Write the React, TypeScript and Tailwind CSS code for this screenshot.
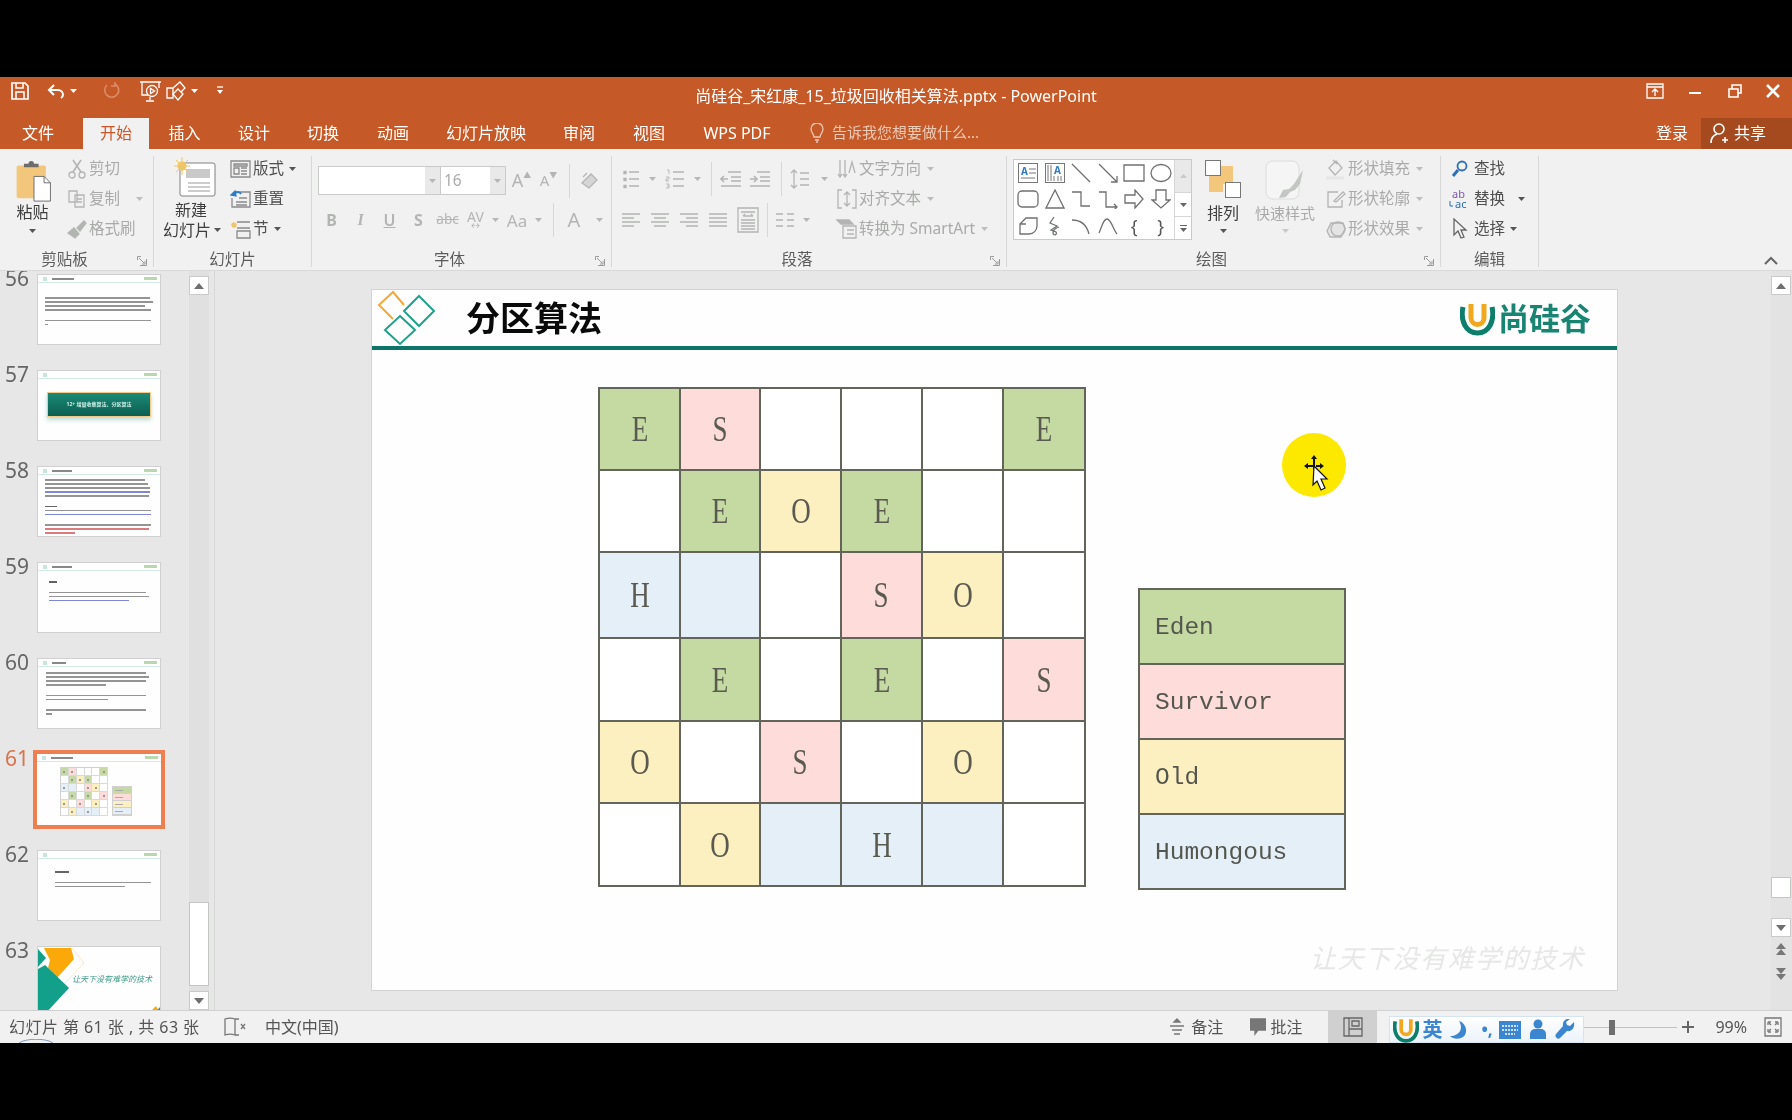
import React from "react";

const G = "#c5daa2", P = "#fddcda", Y = "#fdf0c0", B = "#e4eff8";
const FONT = { fontFamily: '"Noto Sans","Noto Sans CJK SC",sans-serif' };

type IP = { className?: string; children?: React.ReactNode; w?: number; h?: number; vb?: string };
function Ic({ w = 20, h = 20, vb, className = "", children }: IP) {
  return (
    <svg width={w} height={h} viewBox={vb || `0 0 ${w} ${h}`} fill="none" stroke="currentColor" strokeWidth="1.3" className={"shrink-0 " + className}>
      {children}
    </svg>
  );
}
const Caret = ({ c = "text-[#b5b7b5]", cls = "" }: { c?: string; cls?: string }) => (
  <svg width="7" height="4" viewBox="0 0 7 4" className={"shrink-0 " + c + " " + cls}><path d="M0 0h7L3.5 4z" fill="currentColor" /></svg>
);
const Sep = ({ h = "h-[34px]" }: { h?: string }) => <div className={"w-px bg-[#d6d7d6] shrink-0 " + h} />;

function Launcher() {
  return (
    <svg width="10" height="10" viewBox="0 0 10 10" className="absolute right-[6px] bottom-[1px] text-[#9a9c9a]" fill="none" stroke="currentColor">
      <path d="M.5 4V.5H4M2 2l5 5M9.5 3v6.5H3" /><path d="M5 8h3V5" />
    </svg>
  );
}

function Group({ w, title, launcher, children, noBorder }: { w: string; title: string; launcher?: boolean; children: React.ReactNode; noBorder?: boolean }) {
  return (
    <div className={"shrink-0 h-[111px] flex flex-col " + w + (noBorder ? "" : " border-r border-[#d6d7d6]")}>
      <div className="h-[95px] flex">{children}</div>
      <div className={"relative h-[16px] text-[15.5px] leading-[16px] text-[#5c5c5c] text-center " + (launcher ? "pr-[24px]" : "")}>
        {title}
        {launcher && <Launcher />}
      </div>
    </div>
  );
}

function SmallRow({ icon, text, off, caret, iw = "w-[24px]", caretMl = "ml-[6px]" }: { icon: React.ReactNode; text: string; off?: boolean; caret?: boolean; iw?: string; caretMl?: string }) {
  return (
    <div className={"h-[26px] flex items-center text-[15.5px] leading-none whitespace-nowrap " + (off ? "text-[#a9aba9]" : "text-[#505050]")}>
      <div className={"flex justify-center shrink-0 " + iw}>{icon}</div>
      <span>{text}</span>
      {caret && <Caret c={off ? "text-[#bcbebc]" : "text-[#555]"} cls={caretMl} />}
    </div>
  );
}

const Cell = ({ w, children, cls = "" }: { w: string; children?: React.ReactNode; cls?: string }) => (
  <div className={"flex justify-center items-center shrink-0 " + w + " " + cls}>{children}</div>
);

function QAT() {
  return (
    <div className="flex items-center text-white h-[28px] pl-[10px]">
      <Ic w={20} h={20} className="mr-[16px]"><path d="M2 2h13l3 3v13H2z" strokeWidth="1.7" /><path d="M6 2v5h7V2M6 18v-7h8v7" strokeWidth="1.5" /></Ic>
      <Ic w={22} h={20} className="mr-[2px]"><path d="M8 4L3 9l5 5M3 9h9a5 5 0 015 5 4 4 0 01-2 3" strokeWidth="2" /></Ic>
      <Caret c="text-white" cls="mr-[24px]" />
      <Ic w={20} h={20} className="text-[#dc8d6b] mr-[18px]"><path d="M6 4a7 7 0 108-1M14 1v4h-4" strokeWidth="1.6" /></Ic>
      <Ic w={24} h={24} className="mr-[2px]"><path d="M1 3h21M3 3v13h6M20 3v6" /><circle cx="13" cy="12" r="5.5" /><path d="M11.500 9.500v5l4-2.500z" /><path d="M11 18v3M7 22h8" /></Ic>
      <Ic w={24} h={22} className="mr-[2px]"><path d="M2 8h6v10H2zM8 8l7-6 5 6-4 4" /><path d="M13 9l5 5-5 6-5-6z" /></Ic>
      <Caret c="text-white" cls="mr-[18px]" />
      <Ic w={8} h={12}><path d="M1 2h6" /><path d="M1 5h6L4 9z" fill="currentColor" stroke="none" /></Ic>
    </div>
  );
}

function WindowCtl() {
  return (
    <div className="flex justify-end items-center text-white h-[28px] pr-[12px]">
      <Ic w={18} h={16} className="mr-[24px]"><path d="M1 1h16v14H1zM1 4h16M9 13V7M6 9l3-3 3 3" /></Ic>
      <Ic w={14} h={14} className="mr-[26px]"><path d="M1 9h12" strokeWidth="2" /></Ic>
      <Ic w={14} h={14} className="mr-[24px]"><path d="M1 5h9v8H1zM4 5V1h9v8h-3" strokeWidth="1.6" /></Ic>
      <Ic w={14} h={14}><path d="M1 1l12 12M13 1L1 13" strokeWidth="2.600" /></Ic>
    </div>
  );
}

const TABS: [string, string][] = [
  ["文件", "w-[83px] pr-[7px]"], ["开始", "w-[66px]"], ["插入", "w-[71px]"], ["设计", "w-[68px]"], ["切换", "w-[70px]"],
  ["动画", "w-[70px]"], ["幻灯片放映", "w-[116px]"], ["审阅", "w-[70px]"], ["视图", "w-[70px]"], ["WPS PDF", "w-[106px]"],
];

function Tabs() {
  return (
    <div className="h-[31px] flex bg-[#c55a28] text-[16px] text-white">
      {TABS.map(([t, w]) => (
        <div key={t} className={w + " flex items-center justify-center pb-[2px] " + (t === "开始" ? "bg-[#f0f1f0] text-[#c9572a]" : "")}>{t}</div>
      ))}
      <div className="flex items-center ml-[19px] pb-[2px] text-[#edc9b6] text-[15px]">
        <Ic w={16} h={20} className="mr-[7px]"><path d="M5 14c0-3-3-4-3-8a6 6 0 0112 0c0 4-3 5-3 8zM6 17h4M7 19h2" /></Ic>
        告诉我您想要做什么...
      </div>
      <div className="ml-auto flex items-center">
        <span className="mr-[13px] pb-[2px]">登录</span>
        <div className="w-[91px] h-full flex items-center bg-[#a5491f] pl-[8px] pb-[2px]">
          <Ic w={20} h={22} className="mr-[5px]"><circle cx="10" cy="7" r="5" strokeWidth="1.6" /><path d="M2 21c0-5 3-8 6-9M13 18h6M16 15v6" strokeWidth="1.6" /></Ic>
          共享
        </div>
      </div>
    </div>
  );
}

const L = "text-[#b3b5b3]";
function Clipboard() {
  return (
    <>
      <div className="w-[65px] flex flex-col items-center">
        <svg width="38" height="42" viewBox="0 0 38 46" className="mt-[4px] ml-[2px]">
          <rect x="0" y="6" width="32" height="36" rx="2" fill="#f2c77b" />
          <path d="M8 8V4h5a3 3 0 016 0h5v4z" fill="#6c6c6c" />
          <path d="M19 18h11l7 7v20H19z" fill="#fff" stroke="#666" />
          <path d="M30 18v7h7" fill="none" stroke="#666" />
        </svg>
        <div className="text-[16px] leading-[20px] text-[#3e3e3e]">粘贴</div>
        <Caret c="text-[#555]" cls="mt-[7px]" />
      </div>
      <div className="flex flex-col gap-[4px]">
        <SmallRow off text="剪切" icon={<Ic w={20} h={20} className={L}><circle cx="5" cy="16" r="3" /><circle cx="15" cy="16" r="3" /><path d="M6 13L14 1M14 13L6 1" strokeWidth="1.6" /></Ic>} />
        <SmallRow off caret caretMl="ml-[16px]" text="复制" icon={<Ic w={20} h={20} className={L}><path d="M2 2h8v11H2zM8 6h9v12H8zM10 10h5M10 13h5" /></Ic>} />
        <SmallRow off text="格式刷" icon={<Ic w={20} h={20} className={L}><path d="M1 14l6-5 5 6-4 4z" fill="currentColor" /><path d="M10 9l7-7 2 2-6 8z" fill="currentColor" /></Ic>} />
      </div>
    </>
  );
}

function Slides() {
  return (
    <>
      <div className="w-[74px] pl-[4px] flex flex-col items-center shrink-0">
        <svg width="42" height="40" viewBox="0 0 42 40" className="mt-[1px] ml-[4px]">
          <rect x="6" y="6" width="35" height="33" rx="2" fill="#fff" stroke="#808080" />
          <rect x="12" y="12" width="24" height="9" fill="#c9c9c9" />
          <path d="M14 26h22M14 30h22M14 34h22" stroke="#999" />
          <circle cx="8" cy="9" r="4.500" fill="#f0c568" />
          <path d="M8 0v18M0 9h16M2 3l12 12M14 3L2 15" stroke="#f0c568" />
        </svg>
        <div className="text-[16px] leading-[20px] text-[#3e3e3e] mt-[3px] -ml-[4px]">新建</div>
        <div className="flex items-center text-[16px] leading-[20px] text-[#3e3e3e] whitespace-nowrap -ml-[2px]">幻灯片<Caret c="text-[#555]" cls="ml-[3px]" /></div>
      </div>
      <div className="flex flex-col gap-[4px]">
        <SmallRow caret text="版式" iw="w-[25px]" caretMl="ml-[5px]" icon={<Ic w={21} h={20} className="text-[#8a8a8a]"><path d="M1 2h19v16H1zM4 5h13v2H4zM4 9h5v6H4zM11 9h6M11 12h6M11 15h6" /></Ic>} />
        <SmallRow text="重置" iw="w-[25px]" icon={<Ic w={21} h={20} className="text-[#8a8a8a]"><path d="M6 3h14v15H2V9M9 9h8M6 13h11M6 16h11" /><path d="M1 6l4-4 1 5z" fill="#2d7cc4" stroke="#2d7cc4" /><path d="M4 5c3-3 6-2 7 0" stroke="#2d7cc4" strokeWidth="2" /></Ic>} />
        <SmallRow caret text="节" iw="w-[25px]" caretMl="ml-[5px]" icon={<Ic w={21} h={20} className="text-[#8a8a8a]"><path d="M7 3h13M7 9h13M7 12h13v7H7z" /><path d="M4 3v6M1 6h6M2 4l4 4M6 4L2 8" stroke="#f0c568" /></Ic>} />
      </div>
    </>
  );
}

function Font() {
  return (
    <div className="pl-[5px] pt-[10px] w-full">
      <div className="flex items-center h-[29px]">
        <div className="w-[123px] h-[29px] flex bg-white border border-[#c9cbc9] ml-[1px] shrink-0">
          <div className="flex-1" />
          <div className="w-[15px] bg-[#e8e9e8] flex items-center justify-center"><Caret /></div>
        </div>
        <div className="w-[65px] h-[29px] flex bg-[#f4f5f4] border border-[#c9cbc9] border-l-0 shrink-0">
          <div className="flex-1 text-[15.5px] leading-[27px] text-[#a9aba9] pl-[3px] bg-white">16</div>
          <div className="w-[15px] bg-[#e8e9e8] flex items-center justify-center"><Caret /></div>
        </div>
        <Cell w="w-[27px]" cls="ml-[2px] text-[18px] text-[#b3b5b3]"><span>A</span><span className="text-[8px] -mt-[12px]">▲</span></Cell>
        <Cell w="w-[27px]" cls="text-[15px] text-[#b3b5b3]"><span>A</span><span className="text-[8px] -mt-[12px]">▼</span></Cell>
        <div className="ml-[7px]"><Sep h="h-[34px]" /></div>
        <Cell w="w-[38px]"><Ic w={20} h={20} className={L}><path d="M3 12l9-9 6 6-8 8z" fill="#d4d5d4" /><path d="M4 6l4-4" /></Ic></Cell>
      </div>
      <div className="flex items-center h-[26px] mt-[12px] text-[#b3b5b3] text-[16px] leading-none">
        <Cell w="w-[29px]" cls="font-bold">B</Cell>
        <Cell w="w-[29px]" cls="italic font-bold font-['Liberation_Serif']">I</Cell>
        <Cell w="w-[29px]" cls="underline font-semibold">U</Cell>
        <Cell w="w-[29px]" cls="font-bold">S</Cell>
        <Cell w="w-[29px]" cls="line-through text-[13.5px]">abc</Cell>
        <Cell w="w-[27px]" cls="flex-col text-[14px]"><span>AV</span><span className="text-[9px] -mt-[3px]">↔</span></Cell>
        <Cell w="w-[12px]"><Caret /></Cell>
        <Cell w="w-[32px]" cls="text-[17px]">Aa</Cell>
        <Cell w="w-[10px]"><Caret /></Cell>
        <div className="ml-[10px]"><Sep h="h-[34px]" /></div>
        <Cell w="w-[40px]" cls="text-[20px]">A</Cell>
        <Cell w="w-[10px]"><Caret /></Cell>
      </div>
    </div>
  );
}

function Paragraph() {
  return (
    <>
      <div className="w-[223px] shrink-0 pt-[10px]">
        <div className="flex items-center h-[26px]">
          <Cell w="w-[30px]" cls="ml-[4px]"><Ic w={18} h={20} className={L}><path d="M7 3h10M7 10h10M7 17h10" /><path d="M2 2.500h2v2H2zM2 9.500h2v2H2zM2 16.500h2v2H2z" fill="currentColor" /></Ic></Cell>
          <Cell w="w-[12px]"><Caret /></Cell>
          <Cell w="w-[34px]"><Ic w={20} h={20} className={L}><path d="M8 3h11M8 10h11M8 17h11" /><path d="M2 1h2v4M1 8h3v2H1v2h3M1 15h3v4H1M2 17h2" strokeWidth=".9" /></Ic></Cell>
          <Cell w="w-[10px]"><Caret /></Cell>
          <div className="ml-[9px]"><Sep /></div>
          <Cell w="w-[38px]"><Ic w={22} h={20} className={L}><path d="M8 3h13M11 8h10M11 12h10M1 17h20" /><path d="M8 10H1M4 7l-3 3 3 3" strokeWidth="1.6" /></Ic></Cell>
          <Cell w="w-[20px]"><Ic w={22} h={20} className={L}><path d="M8 3h13M11 8h10M11 12h10M1 17h20" /><path d="M1 10h7M5 7l3 3-3 3" strokeWidth="1.6" /></Ic></Cell>
          <div className="ml-[11px]"><Sep /></div>
          <Cell w="w-[36px]"><Ic w={20} h={22} className={L}><path d="M4 2v18M1 5l3-3 3 3M1 17l3 3 3-3M10 5h9M10 11h9M10 17h9" /></Ic></Cell>
          <Cell w="w-[12px]"><Caret /></Cell>
        </div>
        <div className="flex items-center h-[26px] mt-[15px]">
          <Cell w="w-[29px]" cls="ml-[5px]"><Ic w={19} h={18} className={L}><path d="M0 3h18M0 7h12M0 11h18M0 15h12" /></Ic></Cell>
          <Cell w="w-[29px]"><Ic w={19} h={18} className={L}><path d="M0 3h18M3 7h12M0 11h18M3 15h12" /></Ic></Cell>
          <Cell w="w-[29px]"><Ic w={19} h={18} className={L}><path d="M0 3h18M6 7h12M0 11h18M6 15h12" /></Ic></Cell>
          <Cell w="w-[29px]"><Ic w={19} h={18} className={L}><path d="M0 3h18M0 7h18M0 11h18M0 15h18" /></Ic></Cell>
          <Cell w="w-[29px]"><Ic w={22} h={26} className={L}><path d="M1 1h20v24H1zM4 5h14M4 13h14M4 16h14M4 19h14M4 22h14M6 9h10M6 9l2-2M16 9l-2-2" /></Ic></Cell>
          <div className="ml-[5px]"><Sep /></div>
          <Cell w="w-[34px]"><Ic w={18} h={16} className={L}><path d="M0 2h7M11 2h7M0 8h7M11 8h7M0 14h7M11 14h7" /></Ic></Cell>
          <Cell w="w-[8px]"><Caret /></Cell>
        </div>
      </div>
      <div className="flex flex-col gap-[4px]">
        <SmallRow off caret text="文字方向" icon={<Ic w={20} h={20} className={L}><path d="M3 1v17M8 1v17M1 15l2 3 2-3M6 15l2 3 2-3" /><path d="M12 14l3-11 3 11" /></Ic>} />
        <SmallRow off caret text="对齐文本" icon={<Ic w={20} h={20} className={L}><path d="M5 1H1v18h4M15 1h4v18h-4M10 3v14M7 6l3-3 3 3M7 14l3 3 3-3" /></Ic>} />
        <SmallRow off caret text="转换为 SmartArt" icon={<Ic w={22} h={22} className={L}><path d="M1 2h12l4 4H5z" fill="currentColor" /><path d="M7 8h13v12H7zM11 12h7M11 16h7" /></Ic>} />
      </div>
    </>
  );
}

function Gallery() {
  const c = "text-[#6f7170]";
  const items = [
    <svg key="a" width="20" height="20" viewBox="0 0 20 20" fill="none" stroke="#777"><rect x=".5" y=".5" width="19" height="19" fill="#fff" /><text x="3" y="12" fontSize="10" fill="#2d7cc4" stroke="none" fontWeight="700">A</text><path d="M11 6h7M11 10h7M3 15h14" /></svg>,
    <svg key="b" width="20" height="20" viewBox="0 0 20 20" fill="none" stroke="#777"><rect x=".5" y=".5" width="19" height="19" /><text x="9" y="11" fontSize="10" fill="#2d7cc4" stroke="none" fontWeight="700">A</text><path d="M3 2v16M6 2v16M9 13v5M13 13v5M16 13v5" /></svg>,
    <Ic key="c" className={c}><path d="M1 1l18 18" /></Ic>,
    <Ic key="d" className={c}><path d="M1 1l18 18M19 13v6h-6" /></Ic>,
    <Ic key="e" w={22} h={20} className={c}><path d="M1 2h20v16H1z" /></Ic>,
    <Ic key="f" w={22} h={20} className={c}><ellipse cx="11" cy="10" rx="10" ry="8.500" /></Ic>,
    <Ic key="g" w={22} h={20} className={c}><rect x="1" y="2" width="20" height="16" rx="4" /></Ic>,
    <Ic key="h" className={c}><path d="M10 1L1 19h18z" /></Ic>,
    <Ic key="i" className={c}><path d="M1 3h9v14h9" /></Ic>,
    <Ic key="j" className={c}><path d="M1 3h7v15h11M16 15l3 3-3 3" /></Ic>,
    <Ic key="k" className={c}><path d="M1 6h10V1l8 9-8 9v-5H1z" /></Ic>,
    <Ic key="l" className={c}><path d="M5 1h10v10h4l-9 8-9-8h4z" /></Ic>,
    <Ic key="m" className={c}><path d="M2 8l6-6h11v8a8 8 0 01-8 8H2zM2 8h6" /></Ic>,
    <Ic key="n" className={c}><path d="M9 1L5 7l7 3-6 4 5 2c2 3-3 4-3 1s3-5 6-6" /></Ic>,
    <Ic key="o" className={c}><path d="M1 4c10 0 15 6 17 14" /></Ic>,
    <Ic key="p" className={c}><path d="M1 17c3-6 4-14 8-14s6 10 10 15" /></Ic>,
    <span key="q" className="text-[18px] text-[#555] leading-none">{"{"}</span>,
    <span key="r" className="text-[18px] text-[#555] leading-none">{"}"}</span>,
  ];
  return (
    <div className="w-[179px] h-[81px] ml-[6px] mt-[3px] flex bg-white border border-[#c9cbc9] shrink-0">
      <div className="w-[160px] grid grid-cols-6 grid-rows-3 pl-[1px]">
        {items.map((it, i) => (
          <div key={i} className="flex items-center justify-center">{it}</div>
        ))}
      </div>
      <div className="flex-1 flex flex-col border-l border-[#d5d7d5] bg-[#f4f5f4]">
        <div className="h-[33px] bg-[#e8e9e8] flex items-center justify-center border-b border-[#d5d7d5]"><Caret c="text-[#c8cac8] rotate-180" /></div>
        <div className="h-[24px] flex items-center justify-center bg-white border-b border-[#d5d7d5]"><Caret c="text-[#666]" /></div>
        <div className="flex-1 flex flex-col gap-[2px] items-center justify-center bg-white"><div className="w-[7px] h-px bg-[#666]" /><Caret c="text-[#666]" /></div>
      </div>
    </div>
  );
}

function Drawing() {
  return (
    <>
      <Gallery />
      <div className="w-[62px] flex flex-col items-center shrink-0">
        <svg width="36" height="42" viewBox="0 0 36 42" className="mt-[4px]">
          <rect x="12" y="6" width="16" height="18" fill="#f2c77b" />
          <rect x="4" y="16" width="14" height="16" fill="#f2c77b" />
          <rect x=".5" y=".5" width="15" height="15" fill="#fff" stroke="#777" />
          <rect x="20.5" y="22.5" width="15" height="15" fill="#fff" stroke="#777" />
        </svg>
        <div className="text-[16px] leading-[20px] text-[#3e3e3e] mt-[1px]">排列</div>
        <Caret c="text-[#555]" cls="mt-[6px]" />
      </div>
      <div className="w-[62px] flex flex-col items-center shrink-0">
        <svg width="40" height="42" viewBox="0 0 40 42" className="mt-[4px]">
          <rect x="1" y="1" width="33" height="38" rx="7" fill="#f5f5f6" stroke="#dcdcdc" />
          <path d="M14 38l4-8 6-1 5-5 5-8 4-6-3 14-5 6-5 2-4 5z" fill="#c4c6c4" />
        </svg>
        <div className="text-[15px] leading-[20px] text-[#a9aba9] mt-[1px] whitespace-nowrap">快速样式</div>
        <Caret c="text-[#c8cac8]" cls="mt-[6px]" />
      </div>
      <div className="flex flex-col gap-[4px] ml-[8px]">
        <SmallRow off caret text="形状填充" icon={<Ic w={22} h={22} className={L}><path d="M4 10l7-7 6 7-7 7zM8 2l4 4" /><path d="M1 20h18" strokeWidth="3" stroke="#e4e5e4" /></Ic>} />
        <SmallRow off caret text="形状轮廓" icon={<Ic w={20} h={20} className={L}><path d="M16 11v7H2V3h10" /><path d="M8 12l9-9 2 2-9 8z" /></Ic>} />
        <SmallRow off caret text="形状效果" icon={<Ic w={20} h={20} className={L}><path d="M1 12l4-8h12l2 6-4 8H4z" fill="#e3e4e3" /><circle cx="12" cy="10" r="7" /></Ic>} />
      </div>
    </>
  );
}

function Edit() {
  return (
    <div className="flex flex-col gap-[4px] pl-[5px]">
      <SmallRow text="查找" iw="w-[28px]" icon={<Ic w={18} h={18} className="text-[#2d6fb5]"><circle cx="11" cy="6" r="4.500" strokeWidth="1.8" /><path d="M7 10l-5 6" strokeWidth="3" /></Ic>} />
      <SmallRow caret text="替换" iw="w-[28px]" caretMl="ml-[13px]" icon={<svg width="22" height="22" viewBox="0 0 22 22"><text x="3" y="10" fontSize="11" fill="#7e57a8">ab</text><text x="6" y="20" fontSize="11" fill="#2d6fb5">ac</text><path d="M1 13v5h3" stroke="#2d6fb5" fill="none" /></svg>} />
      <SmallRow caret text="选择" iw="w-[28px]" caretMl="ml-[5px]" icon={<Ic w={16} h={22} className="text-[#666]"><path d="M2 1v16l4-4 3 7 3-1-3-7h5z" /></Ic>} />
    </div>
  );
}

function Ribbon() {
  return (
    <div className="h-[122px] bg-[#f0f1f0] flex pt-[7px] border-b border-[#d8d9d8] text-[#505050]">
      <Group w="w-[154px]" title="剪贴板" launcher><Clipboard /></Group>
      <Group w="w-[158px]" title="幻灯片"><Slides /></Group>
      <Group w="w-[300px]" title="字体" launcher><Font /></Group>
      <Group w="w-[395px]" title="段落" launcher><Paragraph /></Group>
      <Group w="w-[434px]" title="绘图" launcher><Drawing /></Group>
      <Group w="w-[98px]" title="编辑"><Edit /></Group>
      <div className="flex-1 flex justify-end items-end pr-[14px] pb-[5px]">
        <Ic w={14} h={9} className="text-[#666]"><path d="M1 8l6-6 6 6" strokeWidth="2" /></Ic>
      </div>
    </div>
  );
}

const MiniHead = ({ title = "w-[22px]" }: { title?: string }) => (
  <div className="h-[8px] flex items-center pl-[5px] pr-[3px] border-b border-[#d5e9e3]">
    <div className="w-[4px] h-[4px] bg-[#c8e6de] mr-[5px]" />
    <div className={"h-[2px] bg-[#888] " + title} />
    <div className="ml-auto w-[13px] h-[3px] bg-[#b9d8ad]" />
  </div>
);

function Bars({ rows }: { rows: [number, string?][] }) {
  return (
    <div className="flex flex-col gap-[2.5px] blur-[0.4px]">
      {rows.map(([w, c], i) =>
        w === 0 ? <div key={i} className="h-[4px]" /> : <div key={i} className="h-[1.5px] opacity-70" style={{ width: w, background: c || "#666" }} />
      )}
    </div>
  );
}

function Thumb({ n, active, children }: { n: number; active?: boolean; children: React.ReactNode }) {
  return (
    <div className="flex h-[71px] mb-[25px] shrink-0">
      <div className={"w-[37px] pl-[5px] -mt-[8px] text-[21px] leading-[24px] " + (active ? "text-[#d8734d]" : "text-[#666]")}>{n}</div>
      <div className={"w-[124px] h-[71px] bg-[#fdfefd] overflow-hidden " + (active ? "outline-[4px] outline-[#ee7f51]" : "border border-[#cfd0cf]")}>{children}</div>
    </div>
  );
}

const GRID: [string, string][] = [
  ["E", G], ["S", P], ["", ""], ["", ""], ["", ""], ["E", G],
  ["", ""], ["E", G], ["O", Y], ["E", G], ["", ""], ["", ""],
  ["H", B], ["", B], ["", ""], ["S", P], ["O", Y], ["", ""],
  ["", ""], ["E", G], ["", ""], ["E", G], ["", ""], ["S", P],
  ["O", Y], ["", ""], ["S", P], ["", ""], ["O", Y], ["", ""],
  ["", ""], ["O", Y], ["", B], ["H", B], ["", B], ["", ""],
];

function MiniSlide61() {
  return (
    <>
      <MiniHead />
      <div className="flex pl-[23px] pt-[5px]">
        <div className="w-[48px] h-[49px] grid grid-cols-6 grid-rows-6 border-l border-t border-[#cfd0cf]">
          {GRID.map(([t, c], i) => (
            <div key={i} className="border-r border-b border-[#d8d9d8] flex items-center justify-center" style={{ background: c || "#fff" }}>
              {t && <div className="w-[2px] h-[2px] bg-[#999]" />}
            </div>
          ))}
        </div>
        <div className="w-[20px] h-[30px] ml-[4px] mt-[19px] flex flex-col border border-[#cfd0cf]">
          {[G, P, Y, B].map((c) => (
            <div key={c} className="flex-1 border-b border-[#cfd0cf] flex items-center pl-[2px]" style={{ background: c }}>
              <div className="w-[8px] h-px bg-[#aaa]" />
            </div>
          ))}
        </div>
      </div>
    </>
  );
}

function Thumbs() {
  return (
    <div className="w-[189px] h-full overflow-hidden pt-[3px] flex flex-col shrink-0">
      <Thumb n={56}><MiniHead /><div className="pl-[7px] pt-[14px]"><Bars rows={[[105], [108], [100], [106], [0], [106], [3]]} /></div></Thumb>
      <Thumb n={57}>
        <MiniHead title="w-0" />
        <div className="mx-[9px] mt-[13px] h-[25px] bg-gradient-to-b from-[#1c8a77] to-[#0b5f52] border border-[#f1c989] flex items-center justify-center text-[5px] text-[#cfeee7] font-bold shadow-[0_3px_4px_#bcdcd5] whitespace-nowrap">12+ 增量收集算法、分区算法</div>
      </Thumb>
      <Thumb n={58}>
        <MiniHead title="w-[20px]" />
        <div className="pl-[7px] pt-[4px]">
          <Bars rows={[[100], [103], [105], [105, "#4a55c0"], [104], [0], [12, "#222"], [106], [106, "#4a55c0"], [0], [106], [104, "#c44"], [30, "#c44"]]} />
        </div>
      </Thumb>
      <Thumb n={59}>
        <MiniHead title="w-[20px]" />
        <div className="pl-[11px] pt-[10px]"><Bars rows={[[8, "#222"], [0], [97], [100], [80, "#4a55c0"]]} /></div>
      </Thumb>
      <Thumb n={60}>
        <MiniHead title="w-[14px]" />
        <div className="pl-[8px] pt-[5px]"><Bars rows={[[100], [103], [100], [60], [0], [100], [62], [0], [100], [6]]} /></div>
      </Thumb>
      <Thumb n={61} active><MiniSlide61 /></Thumb>
      <Thumb n={62}>
        <MiniHead title="w-0" />
        <div className="pl-[17px] pt-[12px]"><Bars rows={[[14, "#222"], [0], [96], [70]]} /></div>
      </Thumb>
      <Thumb n={63}>
        <div className="relative h-full">
          <svg width="124" height="71" viewBox="0 0 124 71" className="absolute inset-0">
            <path d="M34 1l12 15-15 16-6 6" fill="none" stroke="#fbe8c6" />
            <path d="M6 1h27l3 11-17 19-9-10 2-8z" fill="#fba90a" />
            <path d="M0 2l8 9-8 9z" fill="#13a08a" />
            <path d="M0 22l7-4 24 23-24 26H0z" fill="#13a08a" />
            <path d="M111 66l7-7 4 7z" fill="#fba90a" /><path d="M117 66l5-6v6z" fill="#13a08a" />
          </svg>
          <div className="absolute left-[34px] top-[26px] text-[8px] text-[#3f9a8a] italic whitespace-nowrap">让天下没有难学的技术</div>
        </div>
      </Thumb>
    </div>
  );
}

const ArrowBtn = ({ up, cls = "" }: { up?: boolean; cls?: string }) => (
  <div className={"w-[20px] h-[19px] bg-white border border-[#c9cbc9] flex items-center justify-center shrink-0 " + cls}>
    <svg width="10" height="6" viewBox="0 0 10 6" className={"text-[#6f6f6f] " + (up ? "" : "rotate-180")}><path d="M5 0l5 6H0z" fill="currentColor" /></svg>
  </div>
);

function LeftPanel() {
  return (
    <div className="w-[215px] h-full flex shrink-0 border-r border-[#d6d7d6] bg-[#e6e7e6] pr-[5px]">
      <Thumbs />
      <div className="w-[20px] h-full bg-[#dfe0df] flex flex-col pt-[5px]">
        <ArrowBtn up />
        <div className="flex-1" />
        <div className="h-[84px] bg-white border border-[#c4c6c4] mb-[5px]" />
        <ArrowBtn />
      </div>
    </div>
  );
}

function Logos() {
  return (
    <svg width="58" height="56" viewBox="0 0 58 56" className="shrink-0 overflow-visible" fill="none" strokeWidth="2">
      <path d="M26 15L15 2 1 15l14 14" stroke="#f2a93b" />
      <path d="M41 6l15 15-15 15-15-15z" stroke="#22a08c" />
      <path d="M22 26l15 14-15 14-15-14z" stroke="#22a08c" />
    </svg>
  );
}

function ULogo({ s = 35, cls = "" }: { s?: number; cls?: string }) {
  return (
    <svg width={s} height={s} viewBox="0 0 35 35" className={cls}>
      <path d="M3 6c-3 14 3 26 14.500 26S35 20 32 6" fill="none" stroke="#0d7d6c" strokeWidth="5" />
      <path d="M11 3v14a6.500 6.500 0 0013 0V3" fill="none" stroke="#f0a81e" strokeWidth="5" />
    </svg>
  );
}

function Slide() {
  return (
    <div className="relative w-[1247px] h-[702px] bg-[#fdfefd] border border-[#d2d3d2] shrink-0">
      <div className="h-[56px] flex items-center pl-[6px] pr-[26px]">
        <Logos />
        <div className="ml-[30px] text-[34px] font-bold text-[#0a0a0a]">分区算法</div>
        <div className="ml-auto flex items-center">
          <ULogo cls="mr-[3px]" />
          <span className="text-[31px] leading-none font-semibold text-[#1a8473] whitespace-nowrap">尚硅谷</span>
        </div>
      </div>
      <div className="h-[4px] bg-[#0d7568]" />
      <div className="flex pl-[226px] pt-[37px]">
        <div className="w-[488px] h-[500px] grid grid-cols-[81px_80px_81px_81px_81px_82px] grid-rows-[82px_82px_86px_83px_82px_83px] border-l-2 border-t-2 border-[#63655b] shrink-0">
          {GRID.map(([t, c], i) => (
            <div key={i} className="border-r-2 border-b-2 border-[#63655b] flex items-center justify-center font-['Liberation_Serif'] text-[36px] text-[#5a5a50]" style={{ background: c || "#ffffff" }}>
              {t && <span className="inline-block scale-x-75">{t}</span>}
            </div>
          ))}
        </div>
        <div className="w-[208px] h-[302px] ml-[52px] mt-[201px] flex flex-col border-2 border-[#63655b] shrink-0 font-['Liberation_Mono'] text-[24.500px] text-[#55564e]">
          {([["Eden", G], ["Survivor", P], ["Old", Y], ["Humongous", B]] as [string, string][]).map(([t, c], i) => (
            <div key={t} className={"flex-1 flex items-center pl-[15px] pt-[4px] " + (i < 3 ? "border-b-2 border-[#63655b]" : "")} style={{ background: c }}>{t}</div>
          ))}
        </div>
      </div>
      <div className="absolute left-[910px] top-[143px] w-[64px] h-[64px] rounded-full bg-[#fde900]">
        <svg width="40" height="44" viewBox="0 0 40 44" className="absolute left-[20px] top-[20px]">
          <path d="M12 2l3 4h-2v6h-2V6H9zM2 13l4-3v2h5v2H6v2zM22 13l-4 3v-2h-4v-2h4v-2z" fill="#111" />
          <path d="M12 12v5" stroke="#111" strokeWidth="2" />
          <path d="M12 13l13 13h-6l4 9-4 2-4-9-4 4z" fill="#fff" stroke="#111" strokeWidth="1.200" />
        </svg>
      </div>
      <div className="absolute right-[32px] bottom-[19px] text-[26px] leading-none tracking-[1.500px] italic text-[#e6e7e6] whitespace-nowrap">让天下没有难学的技术</div>
    </div>
  );
}

function RightBar() {
  return (
    <div className="w-[21px] h-full flex flex-col bg-[#e2e3e2] pt-[5px] pr-[1px] shrink-0">
      <ArrowBtn up />
      <div className="h-[603px] flex flex-col justify-end"><div className="h-[21px] bg-white border border-[#c4c6c4]" /></div>
      <div className="mt-[20px]"><ArrowBtn /></div>
      <div className="mt-[6px] flex justify-center"><Ic w={12} h={13} className="text-[#777]"><path d="M6 0l5 6H1zM6 6l5 6H1z" fill="currentColor" stroke="none" /></Ic></div>
      <div className="mt-[11px] flex justify-center"><Ic w={12} h={13} className="text-[#777]"><path d="M1 1h10L6 7zM1 7h10l-5 6z" fill="currentColor" stroke="none" /></Ic></div>
    </div>
  );
}

function Status() {
  return (
    <div className="relative h-[33px] bg-[#f0f1f0] border-t border-[#cfd0cf] flex items-center text-[16px] text-[#555] whitespace-nowrap">
      <span className="ml-[9px] w-[214px] tracking-[0.45px]">幻灯片 第 61 张 , 共 63 张</span>
      <Ic w={24} h={20} className="text-[#777] mr-[18px]"><path d="M12 2C9 1 5 1 2 2v16c3-1 7-1 10 0zM12 2h4M12 18h4M18 7l4 5M22 7l-4 5" /></Ic>
      <span>中文(中国)</span>
      <div className="ml-auto flex items-center h-full">
        <Ic w={16} h={18} className="text-[#777] mr-[6px]"><path d="M5 4l3-3 3 3z" fill="currentColor" /><path d="M1 8h14M3 12h10M5 16h6" /></Ic>
        <span className="mr-[27px]">备注</span>
        <Ic w={16} h={18} className="text-[#777] mr-[4px]"><path d="M0 1h16v11H8l-3 4v-4H0z" fill="currentColor" /></Ic>
        <span className="mr-[26px]">批注</span>
        <div className="w-[49px] h-full bg-[#cfd0cf] flex items-center justify-center mr-[12px]">
          <Ic w={20} h={20} className="text-[#666]"><path d="M1 1h18v18H1zM6 1v18M6 12h13M9 4h7v5H9z" /></Ic>
        </div>
        <div className="w-[195px] h-[27px] self-end bg-gradient-to-b from-[#ffffff] to-[#ebf3fa] border border-[#d4e4f0] flex items-center pl-[3px] text-[#3a86d0]">
          <ULogo s={26} cls="mr-[3px]" />
          <span className="text-[20px] font-bold mr-[7px]">英</span>
          <svg width="18" height="20" viewBox="0 0 18 20" className="mr-[14px]"><path d="M10 1c5 8 0 15-9 15 5 5 17 3 16-6 0-4-3-8-7-9z" fill="currentColor" /></svg>
          <span className="text-[17px] font-bold mr-[6px] leading-none">•,</span>
          <svg width="23" height="20" viewBox="0 0 23 20" className="mr-[8px]"><rect y="1" width="22" height="18" fill="currentColor" /><path d="M3 6h16M3 10h16M6 14h10" stroke="#fff" strokeWidth="1.500" strokeDasharray="2 1" /></svg>
          <svg width="16" height="21" viewBox="0 0 16 21" className="mr-[9px]"><circle cx="8" cy="5" r="4.500" fill="currentColor" /><path d="M0 20v-5a5 5 0 015-5h6a5 5 0 015 5v5z" fill="currentColor" /></svg>
          <svg width="20" height="21" viewBox="0 0 20 21"><path d="M19 3l-4 4-3-1-1-3 4-3c-4-1-8 2-7 7L1 15c-2 3 2 6 4 4l7-7c5 1 8-4 7-9z" fill="currentColor" /></svg>
        </div>
        <div className="w-[93px] h-px bg-[#c2c3c2] relative flex items-center">
          <div className="absolute left-[25px] w-[6px] h-[15px] bg-[#6e6f6e]" />
        </div>
        <Ic w={14} h={14} className="text-[#666] ml-[4px] mr-[20px]"><path d="M7 1v12M1 7h12" strokeWidth="2" /></Ic>
        <span className="mr-[17px]">99%</span>
        <Ic w={18} h={20} className="text-[#777] mr-[10px]"><path d="M1 1h16v18H1zM5 6l2 2M13 6l-2 2M5 14l2-2M13 14l-2-2" /><path d="M4 5h3M4 5v3M14 5h-3M14 5v3M4 15h3M4 15v-3M14 15h-3M14 15v-3" /></Ic>
      </div>
      <svg width="36" height="4" viewBox="0 0 36 4" className="absolute left-[18px] bottom-0 text-[#7e9ab8]"><path d="M1 4C8-1 28-1 35 4" fill="none" stroke="currentColor" /></svg>
    </div>
  );
}

export default function App() {
  return (
    <div className="w-[1792px] h-[1120px] bg-black flex flex-col overflow-hidden blur-[0.45px]" style={FONT}>
      <div className="h-[77px] shrink-0" />
      <div className="h-[41px] grid grid-cols-[1fr_auto_1fr] bg-[#c55a28] shrink-0">
        <QAT />
        <div className="self-center pb-[3px] text-white text-[16px] leading-none">尚硅谷_宋红康_15_垃圾回收相关算法.pptx - PowerPoint</div>
        <WindowCtl />
      </div>
      <Tabs />
      <Ribbon />
      <div className="h-[739px] flex bg-[#e6e7e6] shrink-0">
        <LeftPanel />
        <div className="w-[1556px] pl-[156px] pt-[18px]"><Slide /></div>
        <RightBar />
      </div>
      <Status />
    </div>
  );
}
